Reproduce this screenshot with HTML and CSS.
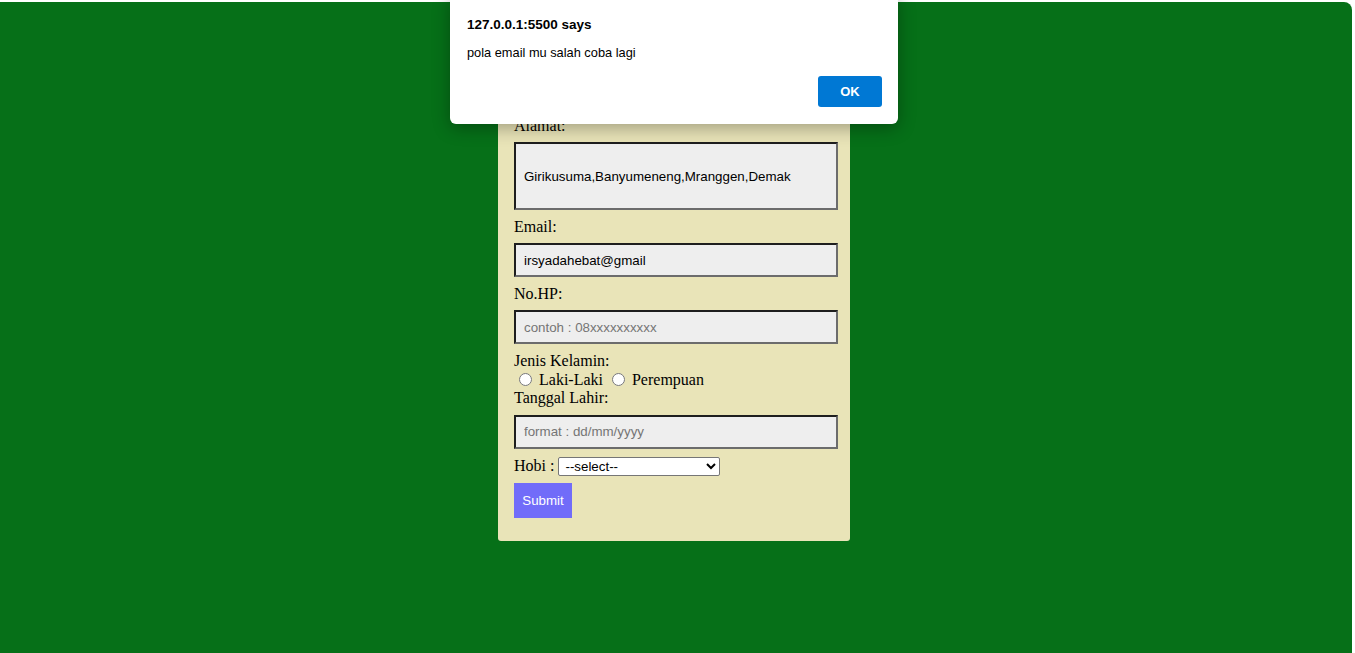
FILE: index.html
```html
<!DOCTYPE html>
<html lang="id">
<head>
<meta charset="utf-8">
<title>Form</title>
<link rel="stylesheet" href="styles.css">
</head>
<body>
<div class="page">
  <form class="card" onsubmit="return false">
    <label class="lbl">Alamat:</label>
    <input class="field tall" type="text" value="Girikusuma,Banyumeneng,Mranggen,Demak">
    <label class="lbl">Email:</label>
    <input class="field" type="text" value="irsyadahebat@gmail">
    <label class="lbl">No.HP:</label>
    <input class="field" type="text" placeholder="contoh : 08xxxxxxxxxx">
    <label class="lbl">Jenis Kelamin:</label>
    <div class="radios"><input type="radio" name="jk" class="radio"> Laki-Laki <input type="radio" name="jk" class="radio"> Perempuan</div>
    <label class="lbl first">Tanggal Lahir:</label>
    <input class="field" type="text" placeholder="format : dd/mm/yyyy">
    <div class="hobi">Hobi :&nbsp;<select class="sel"><option>--select--</option><option>Membaca</option><option>Olahraga</option></select></div>
    <button class="submit" type="submit">Submit</button>
  </form>
</div>
<div class="dialog">
  <div class="dlg-title">127.0.0.1:5500 says</div>
  <div class="dlg-msg">pola email mu salah coba lagi</div>
  <div class="dlg-actions"><button class="ok">OK</button></div>
</div>
</body>
</html>
```
FILE: styles.css
```css
html, body {
  margin: 0;
  padding: 0;
  background: #ffffff;
  height: 100%;
  overflow: hidden;
}
.page {
  margin: 2px 3px 0 0;
  height: 651px;
  background: #067018;
  border-top-right-radius: 8px;
  display: flex;
  align-items: flex-start;
}
.card {
  margin: 99px 0 0 498px;
  width: 352px;
  box-sizing: border-box;
  padding: 16px 12px 23px 16px;
  background: #e9e4b8;
  border-radius: 0 0 3px 3px;
  display: flex;
  flex-direction: column;
  align-items: flex-start;
  font-family: "Liberation Serif", "Times New Roman", serif;
  font-size: 16px;
  color: #000;
}
.lbl {
  display: block;
  line-height: 18.4px;
  margin-top: 7.5px;
}
.lbl:first-child { margin-top: 0; }
.lbl.first { margin-top: 0; }
.field {
  display: block;
  width: 324px;
  height: 34px;
  box-sizing: border-box;
  margin: 7px 0 0 0;
  padding: 0 8px;
  background: #eeeeee;
  border-width: 2px;
  border-style: solid;
  border-color: #1e1e1e #6c6c6c #6c6c6c #1e1e1e;
  font-family: "Liberation Sans", Arial, sans-serif;
  font-size: 13.333px;
  color: #000;
  outline: none;
}
.field::placeholder { color: #757575; }
.field.tall { height: 68px; }
.radios {
  height: 19px;
  line-height: 19px;
  white-space: nowrap;
}
.radio {
  margin: 3px 3px 0 5px;
  width: 13px;
  height: 13px;
  vertical-align: -1px;
}
.hobi {
  margin-top: 8px;
  height: 19px;
  display: flex;
  align-items: center;
  white-space: pre;
}
.sel {
  width: 162px;
  height: 19px;
  font-family: "Liberation Sans", Arial, sans-serif;
  font-size: 13.333px;
  background: #fff;
  color: #000;
  border: 1px solid #767676;
  border-radius: 2px;
  padding: 0 0 0 2px;
}
.submit {
  margin-top: 7px;
  width: 58px;
  padding: 0;
  height: 35px;
  border: none;
  background: #716cf9;
  color: #fff;
  font-family: "Liberation Sans", Arial, sans-serif;
  font-size: 13.333px;
}
.dialog {
  position: absolute;
  left: 450px;
  top: -6px;
  width: 448px;
  height: 130px;
  box-sizing: border-box;
  background: #fff;
  border-radius: 6px;
  box-shadow: 0 4px 18px rgba(0, 0, 0, 0.32);
  padding: 23px 16px 0 17px;
  font-family: "Liberation Sans", Arial, sans-serif;
  color: #000;
}
.dlg-title {
  font-weight: bold;
  font-size: 13.5px;
  line-height: 16px;
}
.dlg-msg {
  margin-top: 12px;
  font-size: 12.8px;
  line-height: 16px;
}
.dlg-actions {
  margin-top: 15px;
  display: flex;
  justify-content: flex-end;
}
.ok {
  width: 64px;
  height: 31px;
  border: none;
  border-radius: 3px;
  background: #0078d4;
  color: #fff;
  font-family: "Liberation Sans", Arial, sans-serif;
  font-weight: bold;
  font-size: 13px;
}
```
